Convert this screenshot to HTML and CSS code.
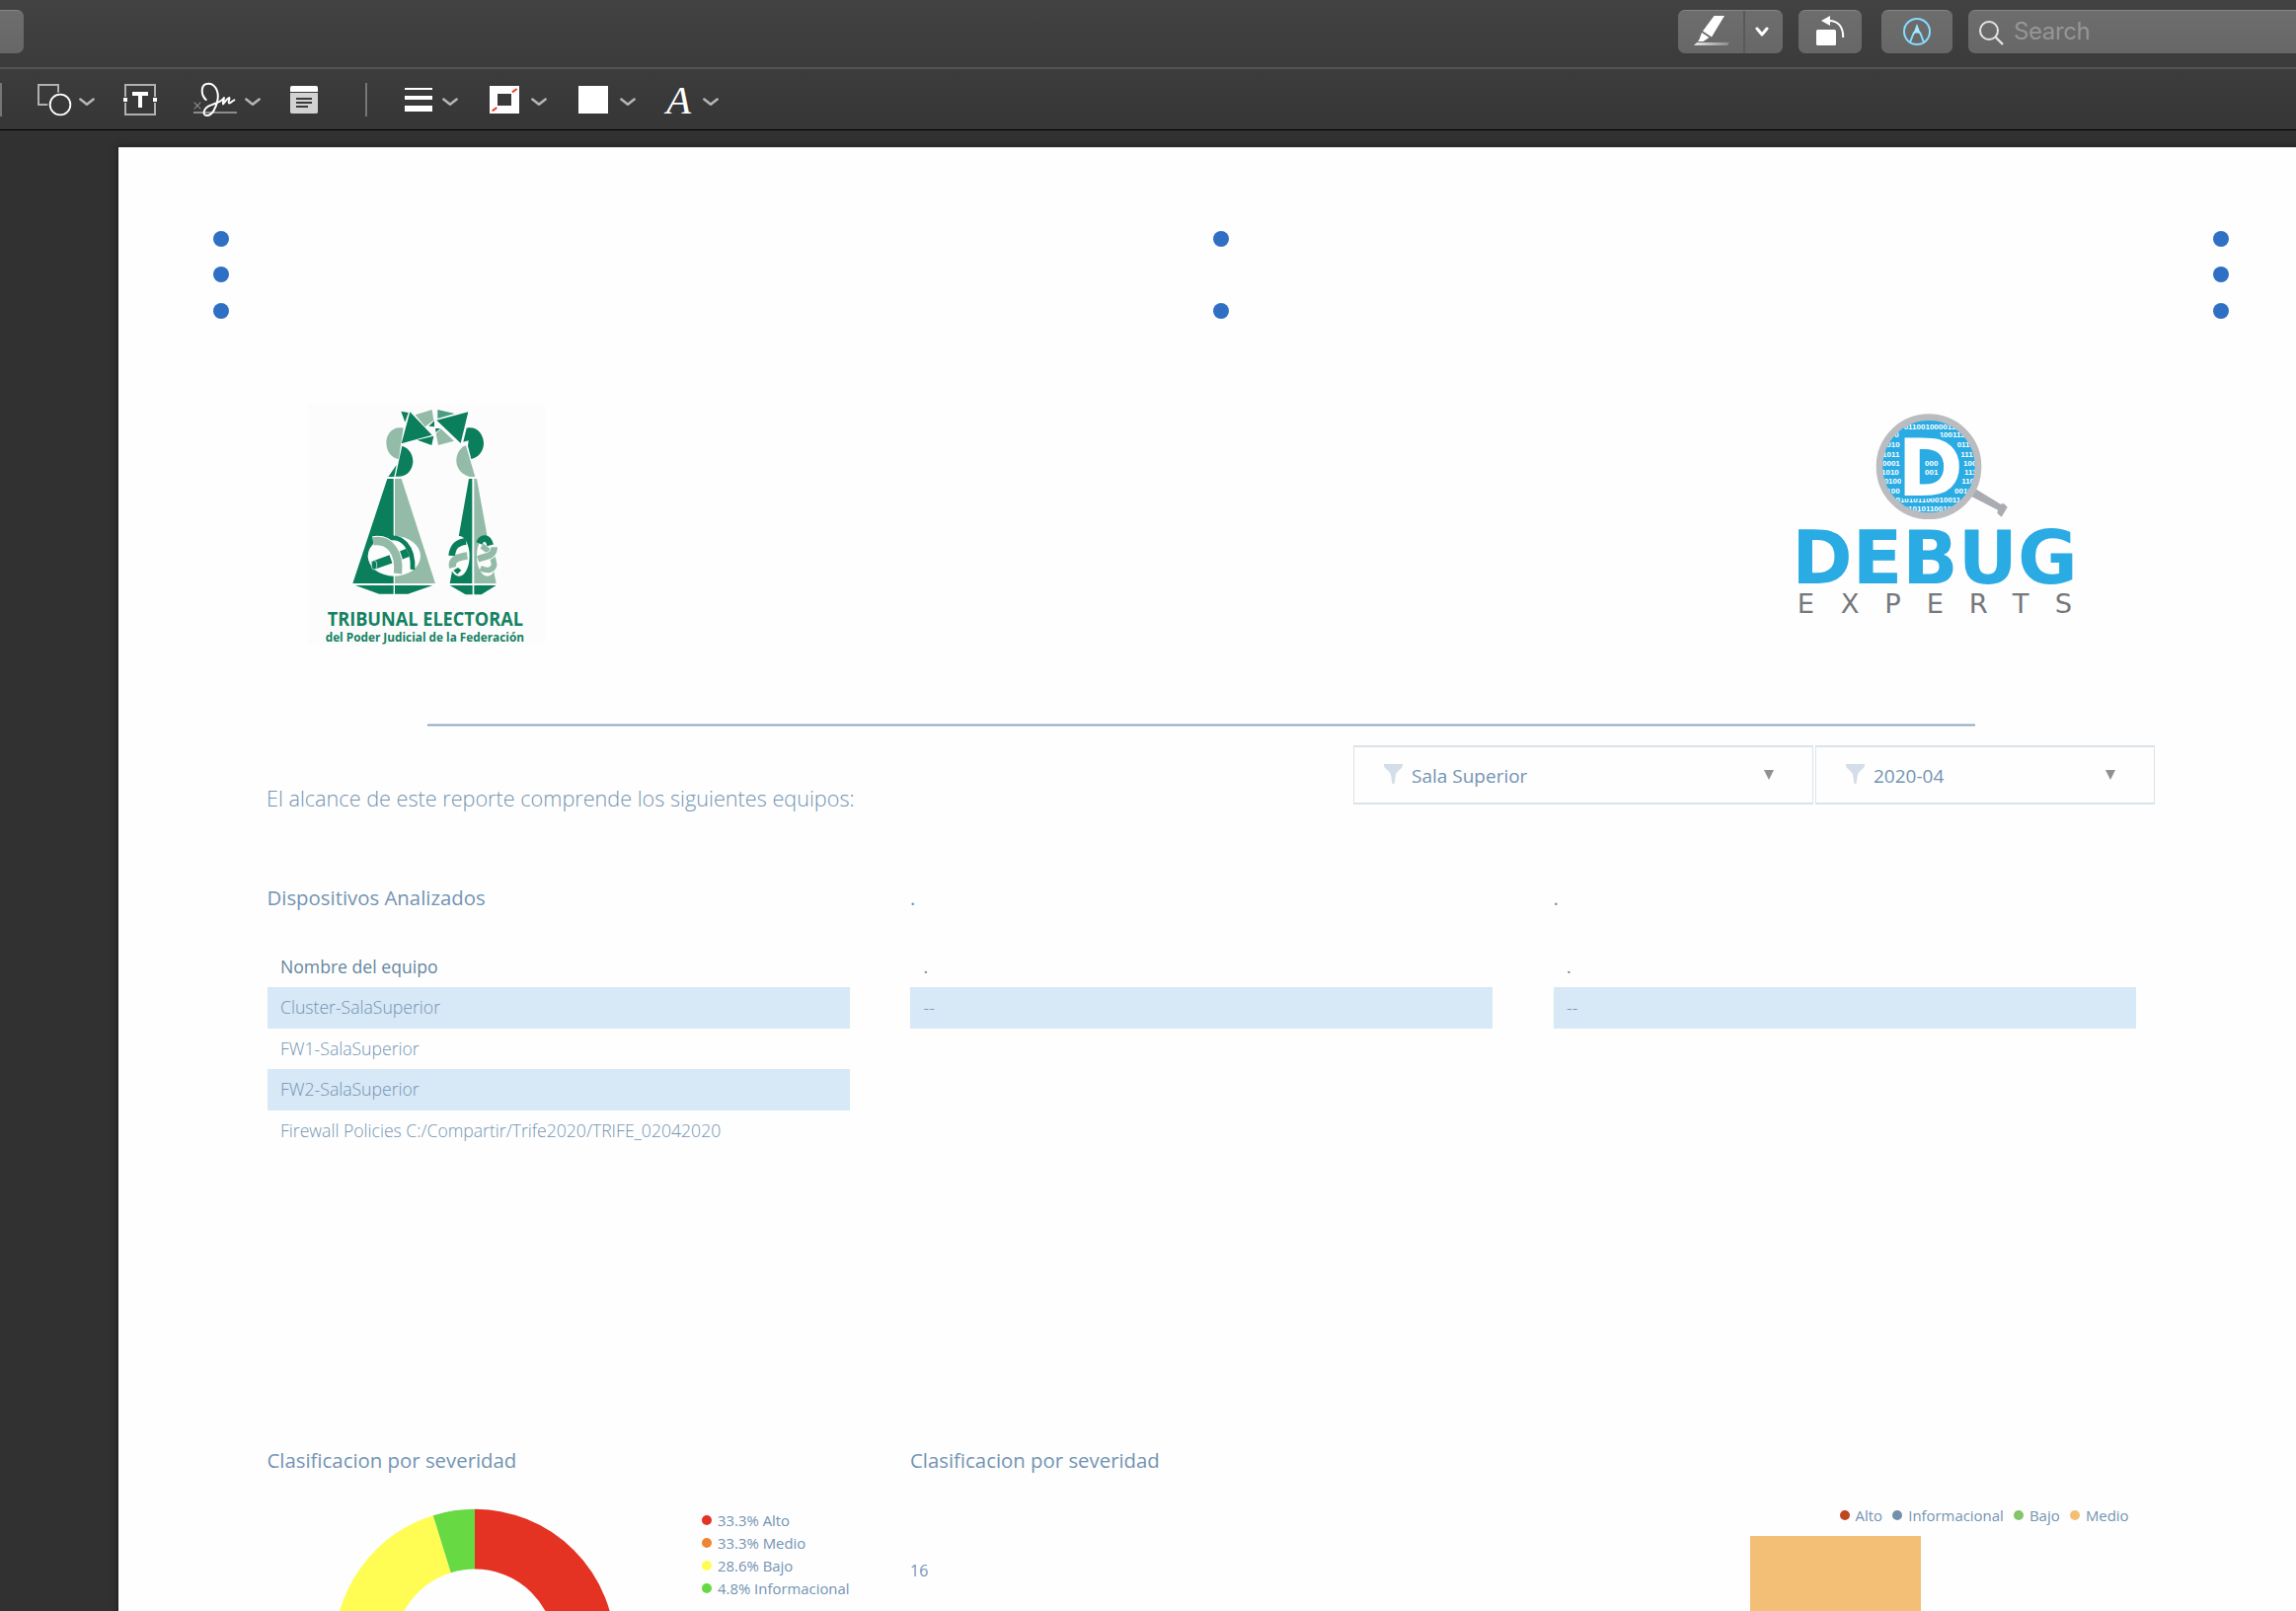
FILE: index.html
```html
<!DOCTYPE html>
<html lang="es">
<head>
<meta charset="utf-8">
<title>Reporte</title>
<link rel="stylesheet" href="styles.css">
</head>
<body>
<svg class="defs" aria-hidden="true">
  <symbol id="chevron" viewBox="0 0 48 26"><path d="M4 4L24 20L44 4" fill="none" stroke="#b5b5b5" stroke-width="7.500" stroke-linecap="round" stroke-linejoin="round"/></symbol>
  <symbol id="funnel" viewBox="0 0 19 20"><path d="M0 0H19V1.5C19 5 12 7 11.8 12L10.6 20H8.4L7.2 12C7 7 0 5 0 1.5Z" fill="#d5dee8"/></symbol>
</svg>

<header class="titlebar">
  <div class="btn btn-edge"></div>
  <div class="btn btn-highlight">
    <svg class="ic-pen" viewBox="0 0 36 32"><path d="M20.500 1H31L18 22.500L9 16.500Z M8 18L15.500 23L9.500 27H4L5.500 25Z" fill="#fff"/><path d="M3 28H36L34 31H0Z" fill="url(#penline)"/><defs><linearGradient id="penline"><stop offset="0" stop-color="#e8e8e8"/><stop offset="1" stop-color="#8a8a8a"/></linearGradient></defs></svg>
    <span class="split"></span>
    <svg class="ic-down" viewBox="0 0 14 10"><path d="M2 2L7 8L12 2" fill="none" stroke="#fff" stroke-width="3" stroke-linecap="round" stroke-linejoin="round"/></svg>
  </div>
  <div class="btn btn-rotate">
    <svg class="ic-rotate" viewBox="0 0 30 30"><rect x="0" y="14" width="20" height="16" rx="1.500" fill="#fff"/><path d="M13 5C22 5 27.500 11 27.200 22" fill="none" stroke="#fff" stroke-width="2"/><path d="M5 5L14 0V10Z" fill="#fff"/></svg>
  </div>
  <div class="btn btn-markup">
    <svg class="ic-markup" viewBox="0 0 28 28"><circle cx="14" cy="14" r="13" fill="none" stroke="#86dcff" stroke-width="2"/><path d="M7 25L11 14.500M21 25L17 14.500" fill="none" stroke="#86dcff" stroke-width="2"/><path d="M14 6L18.300 17.500L15.500 15.500H12.500L9.700 17.500Z" fill="#a5e9ff"/></svg>
  </div>
  <div class="search">
    <svg class="ic-search" viewBox="0 0 25 25"><circle cx="10" cy="10" r="9" fill="none" stroke="#e4e4e4" stroke-width="2"/><path d="M16.500 16.500L24 24" stroke="#e4e4e4" stroke-width="2.400"/></svg>
    <span>Search</span>
  </div>
</header>

<div class="toolbar">
  <i class="sep first"></i>
  <svg class="t-shape" viewBox="108 240 114 126"><path d="M145 318H117V258H177V281" fill="none" stroke="#b0b0b0" stroke-width="6"/><circle cx="183" cy="318" r="31" fill="none" stroke="#fff" stroke-width="5.500"/></svg>
  <svg class="chev c1"><use href="#chevron"/></svg>
  <svg class="t-text" viewBox="369 240 114 126"><path d="M381 294V258H471V294M381 312V348H471V312" fill="none" stroke="#b0b0b0" stroke-width="6"/><path d="M375 297H387V309H375ZM465 297H477V309H465ZM402 279H450V291H432V327H420V291H402Z" fill="#fff"/></svg>
  <svg class="t-sign" viewBox="582 240 144 126"><path d="M588 342H720" stroke="#8c8c8c" stroke-width="6"/><path d="M590 311L610 331M610 311L590 331" stroke="#8c8c8c" stroke-width="3.500"/><path d="M626 303C610 288 608 254 634 254C652 254 665 276 662 300C658 328 644 352 628 351C612 349 620 326 642 319C660 313 676 306 681 297C680 306 676 312 678 316C684 310 691 298 697 297C700 300 692 310 696 313C700 315 706 306 712 304" fill="none" stroke="#fff" stroke-width="6" stroke-linecap="round" stroke-linejoin="round"/></svg>
  <svg class="chev c2"><use href="#chevron"/></svg>
  <svg class="t-note" viewBox="876 240 96 126"><path d="M882 282H966V340Q966 345 961 345H887Q882 345 882 340Z" fill="#d2d2d2"/><path d="M882 279V266Q882 261 887 261H961Q966 261 966 266V279Z" fill="#fff"/><path d="M900 300H948M900 312H948M900 324H936" stroke="#3a3a3a" stroke-width="5.500"/></svg>
  <i class="sep second"></i>
  <svg class="t-lines" viewBox="150 60 84 126"><path d="M150 87H234V93H150ZM150 111H234V123H150ZM150 141H234V159H150Z" fill="#fff"/></svg>
  <svg class="chev c3"><use href="#chevron"/></svg>
  <svg class="t-border" viewBox="408 60 90 126"><path d="M408 81H498V165H408ZM432 105V141H474V105Z" fill="#fff" fill-rule="evenodd"/><path d="M477 100L491 90M416 157L430 147" stroke="#ef3b33" stroke-width="6"/></svg>
  <svg class="chev c4"><use href="#chevron"/></svg>
  <svg class="t-fill" viewBox="678 60 90 126"><path d="M678 81H768V165H678Z" fill="#fff"/></svg>
  <svg class="chev c5"><use href="#chevron"/></svg>
  <span class="t-font">A</span>
  <svg class="chev c6"><use href="#chevron"/></svg>
</div>

<main class="workspace">
  <div class="page">
    <div class="handles">
      <i class="h l a"></i><i class="h m a"></i><i class="h r a"></i>
      <i class="h l b"></i><i class="h r b"></i>
      <i class="h l c"></i><i class="h m c"></i><i class="h r c"></i>
    </div>

    <div class="logos">
      <svg class="logo-te" viewBox="0 0 810 810">
        <rect x="35" y="42" width="722" height="730" fill="#fcfcfd"/>
        <g fill="#93bba8">
          <path d="M362 76L413 60L418 92L392 112Z"/>
          <path d="M440 118L480 155L432 168L425 133Z"/>
          <path d="M326 116C292 108 273 136 274 162C275 190 292 208 312 210L318 166Z"/>
          <path d="M516 169C496 176 486 198 487 218C489 246 514 267 544 264Z"/>
          <path d="M300 270H320L423 588H300Z"/>
          <path d="M541 270H549L580 440L608 588H541Z"/>
        </g>
        <g fill="#0b7f5b">
          <path d="M319 65L341 69L331 98Z"/>
          <path d="M346 67L413 137L320 163Z"/>
          <path d="M368 152L418 140L412 168Z"/>
          <path d="M523 67L427 92L500 162Z"/>
          <path d="M430 60L482 72L430 87Z" fill="#4b9d80"/>
          <path d="M403 110L420 94L420 112ZM423 117H438L425 129Z"/>
          <path d="M518 116C548 108 570 134 570 162C570 186 554 206 532 210L522 170L524 154L508 158Z"/>
          <path d="M322 170C346 178 356 200 355 220C353 248 332 267 302 263Z"/>
          <path d="M305 228L280 264H298Z"/>
          <path d="M277 270H296V588H172Z"/>
          <path d="M180 594H296V620H252ZM300 594H415L340 620H300Z"/>
          <path d="M525 270H535V588H467L495 440Z"/>
          <path d="M467 594H536V622H515ZM541 594H608L563 622H541Z"/>
        </g>
        <ellipse cx="298" cy="505" rx="80" ry="61" fill="#fdfdfd"/>
        <path d="M232 534L288 514M317 503L340 494" stroke="#0b7f5b" stroke-width="26"/>
        <ellipse cx="237" cy="532" rx="8" ry="14" fill="#0b7f5b" stroke="#fff" stroke-width="2"/>
        <path d="M272 454C320 436 358 478 354 546" fill="none" stroke="#0b7f5b" stroke-width="14"/>
        <path d="M234 460C284 452 316 494 309 558" fill="none" stroke="#fff" stroke-width="31"/>
        <path d="M234 460C284 452 316 494 309 558" fill="none" stroke="#93bba8" stroke-width="25"/>
        <ellipse cx="495" cy="505" rx="32" ry="61" fill="#fdfdfd"/>
        <ellipse cx="581" cy="505" rx="32" ry="61" fill="#fdfdfd"/>
        <path d="M473 504C476 474 490 464 516 460" fill="none" stroke="#0b7f5b" stroke-width="20"/>
        <path d="M476 540C470 516 490 508 520 504" fill="none" stroke="#93bba8" stroke-width="22"/>
        <path d="M478 548L492 540L502 548L490 560Z" fill="#0b7f5b"/>
        <path d="M556 466C566 444 584 448 590 472" fill="none" stroke="#0b7f5b" stroke-width="20"/>
        <path d="M564 474C590 490 600 510 602 530C600 548 582 552 560 542" fill="none" stroke="#93bba8" stroke-width="17"/>
        <path d="M552 514C580 504 602 506 602 480" fill="none" stroke="#fff" stroke-width="25"/>
        <path d="M552 514C580 504 602 506 602 478" fill="none" stroke="#93bba8" stroke-width="20"/>
        <text class="te1" x="95" y="718" textLength="595" lengthAdjust="spacingAndGlyphs">TRIBUNAL ELECTORAL</text>
        <text class="te2" x="89" y="764" textLength="604" lengthAdjust="spacingAndGlyphs">del Poder Judicial de la Federación</text>
      </svg>

      <svg class="logo-de" viewBox="0 0 960 720">
        <path d="M586 306L604 286L680 332L690 330L701 341L683 371L670 360L672 350Z" fill="#a9acb0"/>
        <circle cx="462" cy="218" r="150" fill="#2aabe3" stroke="#bbbcbf" stroke-width="20"/>
        <clipPath id="lens"><circle cx="462" cy="218" r="140"/></clipPath>
        <g class="bits" clip-path="url(#lens)">
          <text x="386" y="104">0110010000110</text>
          <text x="358" y="130">0</text><text x="494" y="130">100111</text>
          <text x="334" y="160">010</text><text x="548" y="160">011</text>
          <text x="321" y="188">1011</text><text x="559" y="188">1110</text>
          <text x="321" y="215">0001</text><text x="567" y="215">100</text>
          <text x="318" y="243">1010</text><text x="570" y="243">111</text>
          <text x="326" y="271">0100</text><text x="562" y="271">110</text>
          <text x="334" y="299">100</text><text x="540" y="299">0010</text>
          <text x="348" y="327">1010101100010011</text>
          <text x="386" y="354">010101100101</text>
        </g>
        <text class="lens-d" x="367" y="306" textLength="200" lengthAdjust="spacingAndGlyphs">D</text>
        <g class="bits"><text x="450" y="215">000</text><text x="450" y="243">001</text></g>
        <text class="debug" x="46" y="574" textLength="868" lengthAdjust="spacingAndGlyphs">DEBUG</text>
        <text class="experts" x="62 194 328 455 584 716 845" y="662">EXPERTS</text>
      </svg>
    </div>

    <div class="rule"></div>

    <div class="intro">
      <p class="lead">El alcance de este reporte comprende los siguientes equipos:</p>
      <div class="filters">
        <div class="filter wide"><svg class="funnel"><use href="#funnel"/></svg><span>Sala Superior</span><svg class="caret" viewBox="0 0 10 10"><path d="M0 0H10L5 10Z" fill="#919191"/></svg></div>
        <div class="filter narrow"><svg class="funnel"><use href="#funnel"/></svg><span>2020-04</span><svg class="caret" viewBox="0 0 10 10"><path d="M0 0H10L5 10Z" fill="#919191"/></svg></div>
      </div>
    </div>

    <section class="cols devices">
      <div>
        <h2>Dispositivos Analizados</h2>
        <ul class="list">
          <li class="head name">Nombre del equipo</li>
          <li class="alt">Cluster-SalaSuperior</li>
          <li>FW1-SalaSuperior</li>
          <li class="alt">FW2-SalaSuperior</li>
          <li>Firewall Policies C:/Compartir/Trife2020/TRIFE_02042020</li>
        </ul>
      </div>
      <div>
        <h2>.</h2>
        <ul class="list"><li class="head">.</li><li class="alt">--</li></ul>
      </div>
      <div>
        <h2>.</h2>
        <ul class="list"><li class="head">.</li><li class="alt">--</li></ul>
      </div>
    </section>

    <section class="cols charts">
      <div>
        <h2>Clasificacion por severidad</h2>
        <div class="donut-row">
          <svg class="donut" viewBox="-143 -143 286 286">
            <g fill="none" stroke-width="60.700" transform="rotate(-90)">
              <circle r="111.800" pathLength="1000" stroke="#e43223" stroke-dasharray="333 667"/>
              <circle r="111.800" pathLength="1000" stroke="#ef8433" stroke-dasharray="333 667" stroke-dashoffset="-333"/>
              <circle r="111.800" pathLength="1000" stroke="#fffd54" stroke-dasharray="286 714" stroke-dashoffset="-666"/>
              <circle r="111.800" pathLength="1000" stroke="#67d942" stroke-dasharray="48 952" stroke-dashoffset="-952"/>
            </g>
          </svg>
          <ul class="legend-v">
            <li><i class="red"></i>33.3% Alto</li>
            <li><i class="orange"></i>33.3% Medio</li>
            <li><i class="yellow"></i>28.6% Bajo</li>
            <li><i class="green"></i>4.8% Informacional</li>
          </ul>
        </div>
      </div>
      <div class="bars">
        <h2>Clasificacion por severidad</h2>
        <ul class="legend-h">
          <li><i class="brick"></i>Alto</li>
          <li><i class="slate"></i>Informacional</li>
          <li><i class="leaf"></i>Bajo</li>
          <li><i class="sand"></i>Medio</li>
        </ul>
        <div class="plot">
          <div class="axis"><span>16</span><span>12</span></div>
          <div class="bar"></div>
        </div>
      </div>
    </section>
  </div>
</main>
</body>
</html>
```
FILE: styles.css
```css
* { box-sizing: border-box; }
html, body { margin: 0; height: 1632px; overflow: hidden; }
body {
  display: flex; flex-direction: column;
  background: #313131;
  font-family: "Open Sans", "Noto Sans", sans-serif;
  color: #7394b3;
}
svg { display: block; flex: none; }
.defs { position: absolute; width: 0; height: 0; }
ul, p, h2 { margin: 0; padding: 0; list-style: none; font-weight: 400; }

.titlebar {
  flex: none; height: 70px; width: 2326px;
  display: flex; align-items: flex-start; padding-top: 10px;
  background: linear-gradient(#424242, #3b3b3b);
  border-bottom: 2px solid #545454;
  overflow: hidden;
}
.btn, .search {
  flex: none; height: 44px; display: flex; align-items: flex-start;
  background: linear-gradient(#6d6d6d, #676767);
  border-top: 1px solid #858585; border-radius: 7px;
}
.btn-edge { width: 24px; border-radius: 0 7px 7px 0; margin-right: 1676px; }
.btn-highlight { width: 106px; margin-right: 16px; }
.ic-pen { width: 36px; height: 32px; margin: 4px 0 0 16px; }
.split { width: 2px; height: 43px; background: #595959; margin-left: 14px; }
.ic-down { width: 14px; height: 10px; margin: 16px 0 0 10px; }
.btn-rotate { width: 64px; margin-right: 20px; }
.ic-rotate { width: 30px; height: 30px; margin: 5px 0 0 18px; }
.btn-markup { width: 72px; margin-right: 16px; }
.ic-markup { width: 28px; height: 28px; margin: 7px 0 0 22px; }
.search { width: 360px; color: #969696; font: 24px/30px Inter, sans-serif; }
.ic-search { width: 25px; height: 25px; margin: 10px 0 0 11px; }
.search span { margin: 6px 0 0 10px; letter-spacing: -0.4px; }

.toolbar {
  flex: none; height: 62px; padding-top: 10px;
  display: flex; align-items: flex-start;
  background: linear-gradient(#3c3c3c, #363636);
  border-bottom: 1px solid #000;
}
.toolbar svg { height: 42px; }
.toolbar .chev { width: 16px; height: 9px; margin-top: 18.500px; }
.sep { flex: none; width: 2px; height: 34px; margin-top: 4px; background: #767676; }
.first { margin-right: 34px; }
.t-shape { width: 38px; }
.c1 { margin-left: 6px; }
.t-text { width: 38px; margin-left: 27px; }
.t-sign { width: 48px; margin-left: 33px; }
.c2 { margin-left: 6px; }
.t-note { width: 32px; margin-left: 28px; }
.second { margin-left: 46px; }
.t-lines { width: 28px; margin-left: 38px; }
.c3 { margin-left: 10px; }
.t-border { width: 30px; margin-left: 32px; }
.c4 { margin-left: 12px; }
.t-fill { width: 30px; margin-left: 32px; }
.c5 { margin-left: 12px; }
.t-font {
  width: 30px; margin-left: 31px; margin-top: -1px;
  font: italic 41px/44px "Liberation Serif", serif; color: #fff;
}
.c6 { margin-left: 7px; }

.workspace { flex: 1; padding: 17px 0 0 120px; overflow: hidden; }
.page {
  position: relative; width: 2240px; height: 1700px;
  background: #fefefe; box-shadow: inset 0 1px #d8d8d8, 0 0 8px rgba(0,0,0,.4);
}
.h { position: absolute; width: 16px; height: 16px; border-radius: 50%; background: #2f70c5; }
.l { left: 96px; } .m { left: 1109px; } .r { left: 2122px; }
.a { top: 85px; } .b { top: 121px; } .c { top: 157.500px; }

.logos { display: flex; padding: 246px 0 0 180px; height: 516px; }
.logo-te { width: 270px; height: 270px; }
.logo-de { width: 320px; height: 240px; margin: 5px 0 0 1230px; }
.te1, .te2 { font-family: "Open Sans", sans-serif; font-weight: 700; fill: #148262; }
.te1 { font-size: 56px; }
.te2 { font-size: 35px; }
.bits { font: 700 24px "Liberation Sans", sans-serif; fill: #fff; }
.lens-d { font: 700 238px "DejaVu Sans", sans-serif; fill: #fff; stroke: #2aabe3; stroke-width: 20px; paint-order: stroke; }
.debug { font: 700 225px "DejaVu Sans", sans-serif; fill: #2aabe3; }
.experts { font: 82px "DejaVu Sans", sans-serif; fill: #77787c; }

.rule { width: 1568px; height: 3px; margin: 68px 0 0 313px; background: linear-gradient(#cbd7e4 1px, #87a3c0 1px, #87a3c0 2px, #cbd7e4 2px); }
.intro { display: flex; height: 159px; padding: 19px 0 0 151px; }
.lead { width: 1100px; margin-left: -1px; margin-right: 1px; padding-top: 39px; font-size: 21.650px; line-height: 30px; font-weight: 300; white-space: nowrap; }
.filters { display: flex; gap: 2px; height: 60px; }
.filter {
  display: flex; align-items: flex-start; padding-left: 30px;
  border: 1px solid #dbe3ea; border-width: 2px 1px; background: #fefefe;
  font-size: 19px; line-height: 30px;
}
.wide { width: 466px; } .narrow { width: 344px; }
.filter span { margin: 14px 0 0 9px; }
.funnel { width: 19px; height: 20px; margin-top: 17px; }
.caret { width: 10px; height: 10px; margin: 23px 39px 0 auto; }

.cols { display: grid; grid-template-columns: 590px 590px 590px; column-gap: 61.500px; margin-left: 150.500px; }
.cols h2 { font-size: 20.360px; line-height: 28px; white-space: nowrap; }
.devices { height: 569.500px; align-content: start; }
.list { margin-top: 35.500px; }
.list li { height: 41.500px; padding-left: 13.500px; font-size: 17.620px; line-height: 41.500px; font-weight: 300; white-space: nowrap; }
.list .head { font-weight: 400; color: #64879f; }
.list .alt { background: #d7e8f6; }

.donut-row { display: flex; padding: 35px 0 0 67px; }
.donut { width: 286px; height: 286px; }
.legend-v { margin: 1px 0 0 87.500px; }
.legend-v li, .legend-h li { display: flex; align-items: center; height: 23px; font-size: 14.900px; line-height: 23px; white-space: nowrap; }
.legend-v i, .legend-h i { flex: none; width: 10px; height: 10px; border-radius: 50%; margin-right: 6px; }
.red { background: #e43223; } .orange { background: #ef8433; } .yellow { background: #fffd54; } .green { background: #67d942; }
.brick { background: #bd4822; } .slate { background: #7391ad; } .leaf { background: #82c56c; } .sand { background: #f3bf76; }
.bars { grid-column: 2 / 4; }
.legend-h { display: flex; gap: 10.300px; justify-content: flex-end; margin: 31px 7px 0 0; }
.plot { display: flex; margin-top: 9px; }
.axis { width: 851px; padding-top: 23px; font-size: 16px; }
.axis span { display: block; height: 47px; line-height: 24px; }
.bar { width: 173px; height: 200px; background: #f3bf76; }
```
